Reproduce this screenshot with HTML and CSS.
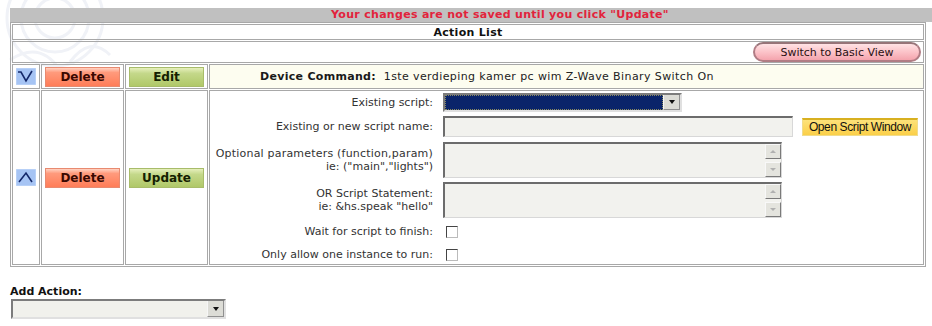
FILE: index.html
```html
<!DOCTYPE html>
<html>
    <head>
        <meta charset="utf-8">
        <title>Event Actions</title>
        <link rel="stylesheet" href="styles.css">
    </head>

    <body>
        <svg class="watermark" width="130" height="80" viewBox="0 0 130 80">
            <circle cx="55" cy="18" r="48" />
            <circle cx="55" cy="18" r="34" />
            <circle cx="55" cy="18" r="20" />
            <path d="M10 60 Q 40 40 60 70 M70 62 Q 90 35 110 55" />
        </svg>

        <div id="page">
            <div class="notice">Your changes are not saved until you click "Update"</div>

            <table class="actions">
                <colgroup>
                    <col class="c-arrow">
                    <col class="c-btn">
                    <col class="c-btn">
                    <col class="c-body">
                </colgroup>
                <tr class="r-title">
                    <th colspan="4">Action List</th>
                </tr>
                <tr class="r-view">
                    <td colspan="4">
                        <button class="pill">Switch to Basic View</button>
                    </td>
                </tr>
                <tr class="r-cmd">
                    <td class="arrow-cell">
                        <svg class="arrow" width="20" height="17" viewBox="0 0 20 17">
                            <rect x="0" y="0" width="20" height="17" />
                            <path d="M2 4 H5 L10 13 L16 3" />
                        </svg>
                    </td>
                    <td><button class="btn btn-delete">Delete</button></td>
                    <td><button class="btn btn-ok">Edit</button></td>
                    <td class="cmd-text">
                        <b>Device Command:</b>&nbsp; 1ste verdieping kamer pc wim Z-Wave Binary Switch On
                    </td>
                </tr>
                <tr class="r-edit">
                    <td class="arrow-cell">
                        <svg class="arrow" width="20" height="17" viewBox="0 0 20 17">
                            <rect x="0" y="0" width="20" height="17" />
                            <path d="M3 13 L10 4 L16 13" />
                        </svg>
                    </td>
                    <td><button class="btn btn-delete">Delete</button></td>
                    <td><button class="btn btn-ok">Update</button></td>
                    <td class="form-cell">
                        <div class="script-form">
                            <label class="lbl">Existing script:</label>
                            <div class="ctl">
                                <div class="combo combo-script">
                                    <span class="combo-value"></span>
                                    <span class="combo-btn"><i></i></span>
                                </div>
                            </div>

                            <label class="lbl">Existing or new script name:</label>
                            <div class="ctl">
                                <div class="field field-name"></div>
                                <button class="open-btn">Open Script Window</button>
                            </div>

                            <label class="lbl"><span class="wide">Optional parameters (function,param)</span><br>ie: ("main","lights")</label>
                            <div class="ctl">
                                <div class="field area">
                                    <span class="vscroll"><span class="sb sb-up"><i></i></span><span class="sb sb-down"><i></i></span></span>
                                </div>
                            </div>

                            <label class="lbl">OR Script Statement:<br>ie: &amp;hs.speak "hello"</label>
                            <div class="ctl">
                                <div class="field area">
                                    <span class="vscroll"><span class="sb sb-up"><i></i></span><span class="sb sb-down"><i></i></span></span>
                                </div>
                            </div>

                            <label class="lbl">Wait for script to finish:</label>
                            <div class="ctl"><span class="check"></span></div>

                            <label class="lbl">Only allow one instance to run:</label>
                            <div class="ctl"><span class="check"></span></div>
                        </div>
                    </td>
                </tr>
            </table>

            <div class="add-action">
                <div class="add-title">Add Action:</div>
                <div class="combo combo-add">
                    <span class="combo-value"></span>
                    <span class="combo-btn"><i></i></span>
                </div>
            </div>
        </div>
    </body>
</html>
```

FILE: styles.css
```css
body {
    margin : 0;
    background-color : white;
    color : #222;
    font-family : "DejaVu Sans", Verdana, sans-serif;
    font-size : 11px;
    overflow : hidden;
}

svg.watermark {
    position : absolute;
    left : 0;
    top : 0;
    fill : none;
    stroke : #f0f2f7;
    stroke-width : 3;
}

div#page {
    position : relative;
    padding : 8px 0 0 10px;
}

div.notice {
    width : 980px;
    height : 14px;
    line-height : 14px;
    background-color : #c0c0c0;
    color : #e2233c;
    font-weight : bold;
    font-size : 11px;
    letter-spacing : 0.3px;
    text-align : center;
}

table.actions {
    table-layout : fixed;
    width : 916px;
    border : 1px solid #a8a8a8;
    border-spacing : 1px;
    margin-top : 0;
}

col.c-arrow { width : 28px; }
col.c-btn { width : 83px; }

table.actions th,
table.actions td {
    border : 1px solid #a8a8a8;
    padding : 0;
    box-sizing : border-box;
}

tr.r-title th {
    height : 16px;
    font-size : 11px;
    letter-spacing : 0.3px;
    font-weight : bold;
    color : #111;
    text-align : center;
}

tr.r-view td {
    height : 22px;
    text-align : right;
    padding-right : 2px;
}

tr.r-cmd td {
    height : 25px;
    text-align : center;
}

tr.r-edit td {
    height : 175px;
    text-align : center;
}

td.cmd-text {
    text-align : left !important;
    padding-left : 50px !important;
    background-color : #fdfdf0;
    color : #222;
    letter-spacing : 0.4px;
}

td.cmd-text b {
    color : #1a1a1a;
    letter-spacing : 0.3px;
}

svg.arrow {
    display : block;
    margin : 0 auto 0 3px;
}

svg.arrow rect {
    fill : #a6c4f4;
    stroke : #c8dcfa;
    stroke-width : 1;
}

svg.arrow path {
    fill : none;
    stroke : #14286a;
    stroke-width : 1.6;
}

button.btn {
    display : block;
    margin : 0 auto;
    width : 75px;
    height : 20px;
    padding : 0;
    font-family : "DejaVu Sans", Verdana, sans-serif;
    font-size : 12px;
    font-weight : bold;
    cursor : pointer;
}

button.btn-delete {
    color : #3a0800;
    border : 1px solid #e88a70;
    background : linear-gradient(#ffd2c2 0%, #ff9a7c 25%, #ff7d58 100%);
}

button.btn-ok {
    color : #142000;
    border : 1px solid #a8bc6a;
    background : linear-gradient(#e6efbc 0%, #c4d88a 30%, #b0c868 100%);
}

button.pill {
    width : 168px;
    height : 20px;
    padding : 0;
    border : 2px solid #b07c84;
    border-top-color : #967478;
    border-radius : 10px;
    background : linear-gradient(#ffe2e4 0%, #fbc0c6 55%, #f4a4ad 100%);
    color : #2a1012;
    font-family : "DejaVu Sans", Verdana, sans-serif;
    font-size : 11px;
    vertical-align : middle;
}

/* script editor */

div.script-form {
    display : grid;
    grid-template-columns : 223px 1fr;
    grid-template-rows : 19px 21px 37px 36px 19px 19px;
    column-gap : 10px;
    row-gap : 4px;
    padding-top : 2px;
    text-align : left;
}

label.lbl {
    align-self : center;
    text-align : right;
    line-height : 13px;
    color : #333;
    white-space : nowrap;
}

label.lbl span.wide {
    letter-spacing : 0.2px;
}

div.ctl {
    display : flex;
    align-items : center;
    gap : 9px;
}

div.combo {
    display : flex;
    box-sizing : border-box;
    height : 19px;
    border : 2px solid #7c7c7c;
    border-right-color : #e0e0e0;
    border-bottom-color : #e0e0e0;
    background-color : #f1f1ec;
}

div.combo-script {
    width : 239px;
}

div.combo-script span.combo-value {
    background-color : #0a246a;
    outline : 1px dotted #8a8a60;
    outline-offset : -1px;
}

span.combo-value {
    flex : 1;
}

span.combo-btn {
    display : flex;
    align-items : center;
    justify-content : center;
    width : 15px;
    background-color : #dcdcd6;
    border-left : 1px solid #f6f6f6;
    border-right : 1px solid #909090;
    border-bottom : 1px solid #909090;
}

span.combo-btn i {
    width : 0;
    height : 0;
    border-left : 3px solid transparent;
    border-right : 3px solid transparent;
    border-top : 4px solid #111;
}

div.field {
    box-sizing : border-box;
    background-color : #f2f2ee;
    border : 2px solid #6c6c6c;
    border-right : 1px solid #d8d8d8;
    border-bottom : 1px solid #d8d8d8;
}

div.field-name {
    width : 350px;
    height : 21px;
}

div.area {
    display : flex;
    justify-content : flex-end;
    width : 339px;
    height : 36px;
}

span.vscroll {
    display : flex;
    flex-direction : column;
    justify-content : space-between;
    width : 16px;
}

span.sb {
    display : flex;
    align-items : center;
    justify-content : center;
    height : 15px;
    background-color : #e4e4de;
    border : 1px solid #f8f8f8;
    border-right-color : #7a7a7a;
    border-bottom-color : #7a7a7a;
    box-sizing : border-box;
}

span.sb i {
    width : 0;
    height : 0;
    border-left : 3px solid transparent;
    border-right : 3px solid transparent;
}

span.sb-up i {
    border-bottom : 3px solid #b0b0b0;
}

span.sb-down i {
    border-top : 3px solid #b0b0b0;
}

button.open-btn {
    width : 116px;
    height : 18px;
    padding : 0;
    border : 1px solid #f0dc8c;
    border-top : 2px solid #d8b020;
    background : linear-gradient(#fde27a 0%, #fbcf48 100%);
    color : #111;
    font-family : "Liberation Sans", Arial, sans-serif;
    font-size : 12px;
    letter-spacing : -0.4px;
}

span.check {
    display : block;
    box-sizing : border-box;
    width : 12px;
    height : 12px;
    margin-left : 3px;
    background-color : white;
    border : 1px solid #444;
    border-right-color : #bbb;
    border-bottom-color : #bbb;
}

/* add action */

div.add-action {
    margin-top : 18px;
}

div.add-title {
    font-weight : bold;
    color : #111;
    line-height : 14px;
}

div.combo-add {
    width : 215px;
    height : 20px;
    margin-left : 1px;
}
```
